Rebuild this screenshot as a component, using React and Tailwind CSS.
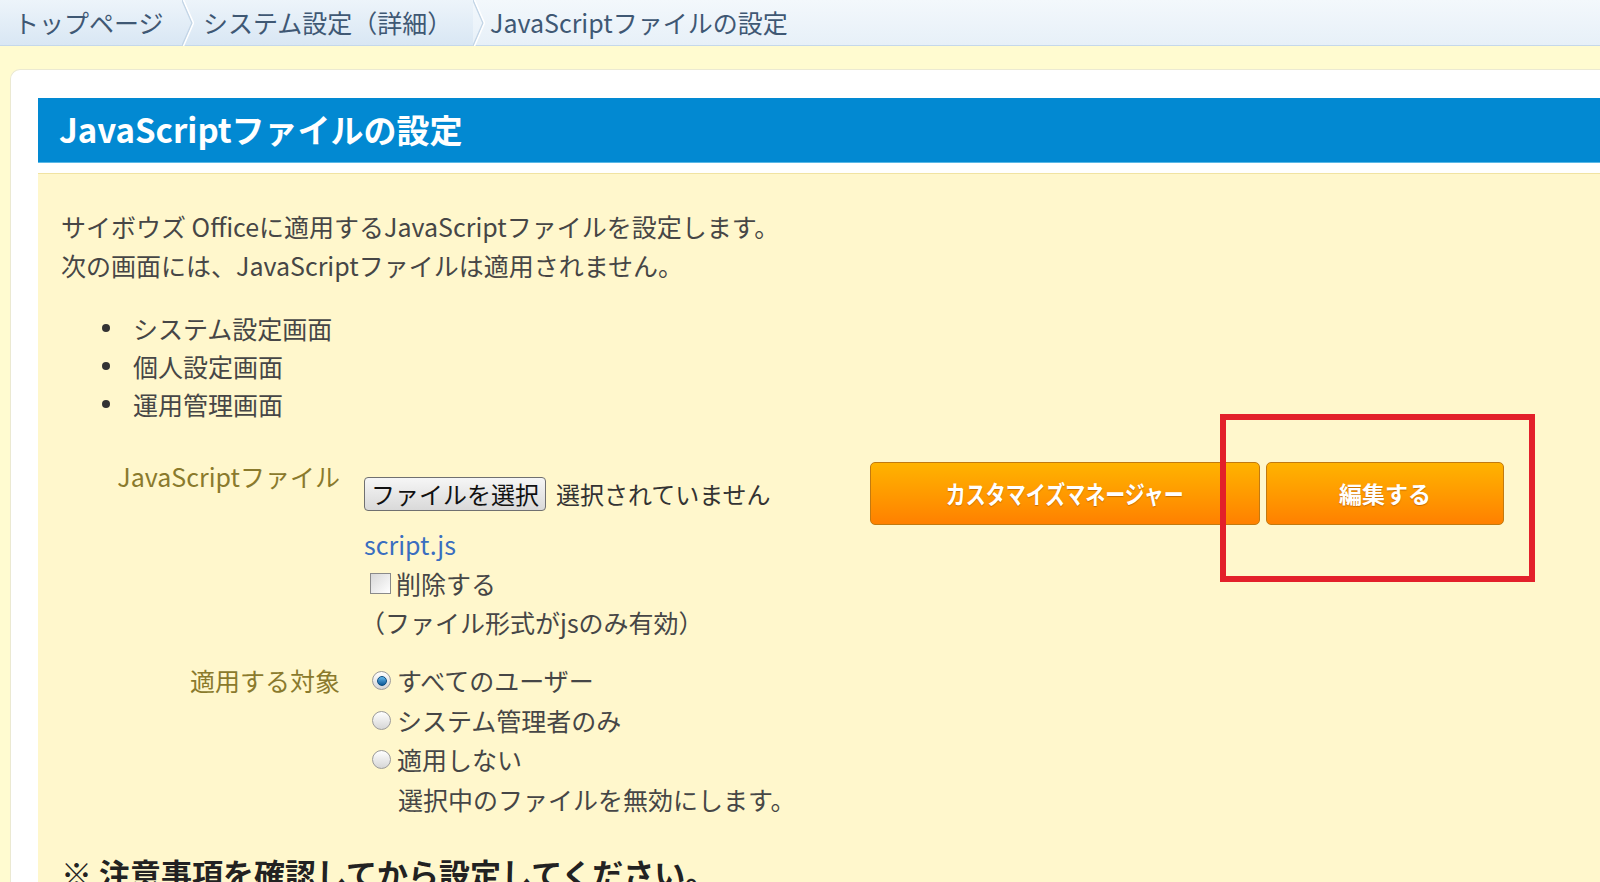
import React from "react";

const font = { fontFamily: '"Noto Sans CJK JP", "Noto Sans", sans-serif' };

function Chevron() {
  return (
    <svg width="12" height="46" viewBox="0 0 12 46" className="shrink-0">
      <polyline points="0,0 10,23 0,46" fill="none" stroke="#c3d5e6" strokeWidth="1.5" />
      <polyline points="1.5,0 11.5,23 1.5,46" fill="none" stroke="#ffffff" strokeWidth="1.5" />
    </svg>
  );
}

function Radio({ checked }) {
  return (
    <span className="inline-flex h-[19px] w-[19px] shrink-0 items-center justify-center rounded-full border border-[#9a9a9a] bg-gradient-to-b from-[#ffffff] to-[#d6d6d6]">
      {checked && (
        <span className="h-[10px] w-[10px] rounded-full border border-[#0b4d80] bg-gradient-to-b from-[#63b8ec] to-[#0a5a97]" />
      )}
    </span>
  );
}

export default function App() {
  const bullets = ["システム設定画面", "個人設定画面", "運用管理画面"];

  return (
    <div style={font} className="relative h-[882px] w-full overflow-hidden bg-[#fffbd0] text-[#464646]">
      {/* Breadcrumb */}
      <div className="flex h-[46px] items-center border-b border-[#c5d8ea] bg-gradient-to-b from-[#f3f8fc] to-[#e7f0f8] text-[25px] text-[#3f5874]">
        <div className="flex h-full items-center bg-gradient-to-b from-[#edf4fa] to-[#d9e7f4]">
          <span className="w-[182px] pl-[14px]">トップページ</span>
          <Chevron />
          <span className="w-[279px] pl-[9px]">システム設定（詳細）</span>
        </div>
        <Chevron />
        <span className="pl-[5px]">JavaScriptファイルの設定</span>
      </div>

      {/* Yellow band */}
      <div className="h-[23px]" />

      {/* Panel */}
      <div className="ml-[10px] rounded-tl-[10px] border-l border-t border-[#ebe9d2] bg-white pl-[27px] pt-[28px]">
        <div className="flex h-[65px] items-center border-b border-[#5ab8e6] bg-[#0289d2] pl-[21px] text-[33px] font-bold text-white">
          JavaScriptファイルの設定
        </div>
        <div className="h-[10px]" />
        <div className="h-[720px] border-t border-[#f1e3a2] bg-[#fff7cc] pl-[23px] pt-[33px] text-[25px] leading-[39px]">
          <p>サイボウズ Officeに適用するJavaScriptファイルを設定します。</p>
          <p>次の画面には、JavaScriptファイルは適用されません。</p>

          <ul className="mt-[24px] pl-[72px] leading-[38px]">
            {bullets.map((b) => (
              <li key={b} className="relative">
                <span className="absolute left-[-31px] top-[15px] h-[8px] w-[8px] rounded-full bg-[#333]" />
                {b}
              </li>
            ))}
          </ul>

          {/* Form */}
          <div className="mt-[34px] grid grid-cols-[279px_1fr] gap-x-[24px]">
            <div className="text-right text-[#8a7a2c]">JavaScriptファイル</div>
            <div className="pt-[5px]">
              <div className="flex h-[63px] items-center">
                <div className="flex w-[506px] items-center">
                  <button className="h-[34px] w-[182px] rounded-[4px] border border-[#707070] bg-gradient-to-b from-[#f6f6f6] to-[#d9d9d9] text-[24px] leading-none text-[#111]">
                    ファイルを選択
                  </button>
                  <span className="ml-[10px] text-[24px] text-[#333]">選択されていません</span>
                </div>
                <button className="h-[63px] w-[390px] rounded-[5px] border border-[#c27a10] bg-gradient-to-b from-[#ffb300] to-[#ff8000] font-bold text-white [text-shadow:0_1px_1px_rgba(150,70,0,0.5)]">
                  <span className="inline-block scale-x-[0.8] text-[25px]">カスタマイズマネージャー</span>
                </button>
                <button className="ml-[6px] h-[63px] w-[238px] rounded-[5px] border border-[#c27a10] bg-gradient-to-b from-[#ffb300] to-[#ff8000] text-[23px] font-bold text-white [text-shadow:0_1px_1px_rgba(150,70,0,0.5)]">
                  編集する
                </button>
              </div>
              <div className="text-[#3a6ec0]">script.js</div>
              <div className="flex items-center">
                <span className="ml-[6px] mr-[5px] h-[21px] w-[21px] border border-[#8a8a8a] bg-gradient-to-br from-[#d8d8d8] to-[#ffffff]" />
                削除する
              </div>
              <div className="-ml-[4px]">（ファイル形式がjsのみ有効）</div>
            </div>

            <div className="mt-[19px] text-right text-[#8a7a2c]">適用する対象</div>
            <div className="mt-[19px] leading-[39.5px]">
              <div className="flex items-center gap-[6px] pl-[8px]">
                <Radio checked />
                すべてのユーザー
              </div>
              <div className="flex items-center gap-[6px] pl-[8px]">
                <Radio />
                システム管理者のみ
              </div>
              <div className="flex items-center gap-[6px] pl-[8px]">
                <Radio />
                適用しない
              </div>
              <div className="pl-[34px]">選択中のファイルを無効にします。</div>
            </div>
          </div>

          <p className="mt-[34px] text-[31px] font-bold leading-[40px] text-[#222]">
            ※ 注意事項を確認してから設定してください。
          </p>
        </div>
      </div>

      {/* Highlight annotation */}
      <div className="absolute left-[1220px] top-[414px] h-[168px] w-[315px] border-[6px] border-[#e3202a]" />
    </div>
  );
}
